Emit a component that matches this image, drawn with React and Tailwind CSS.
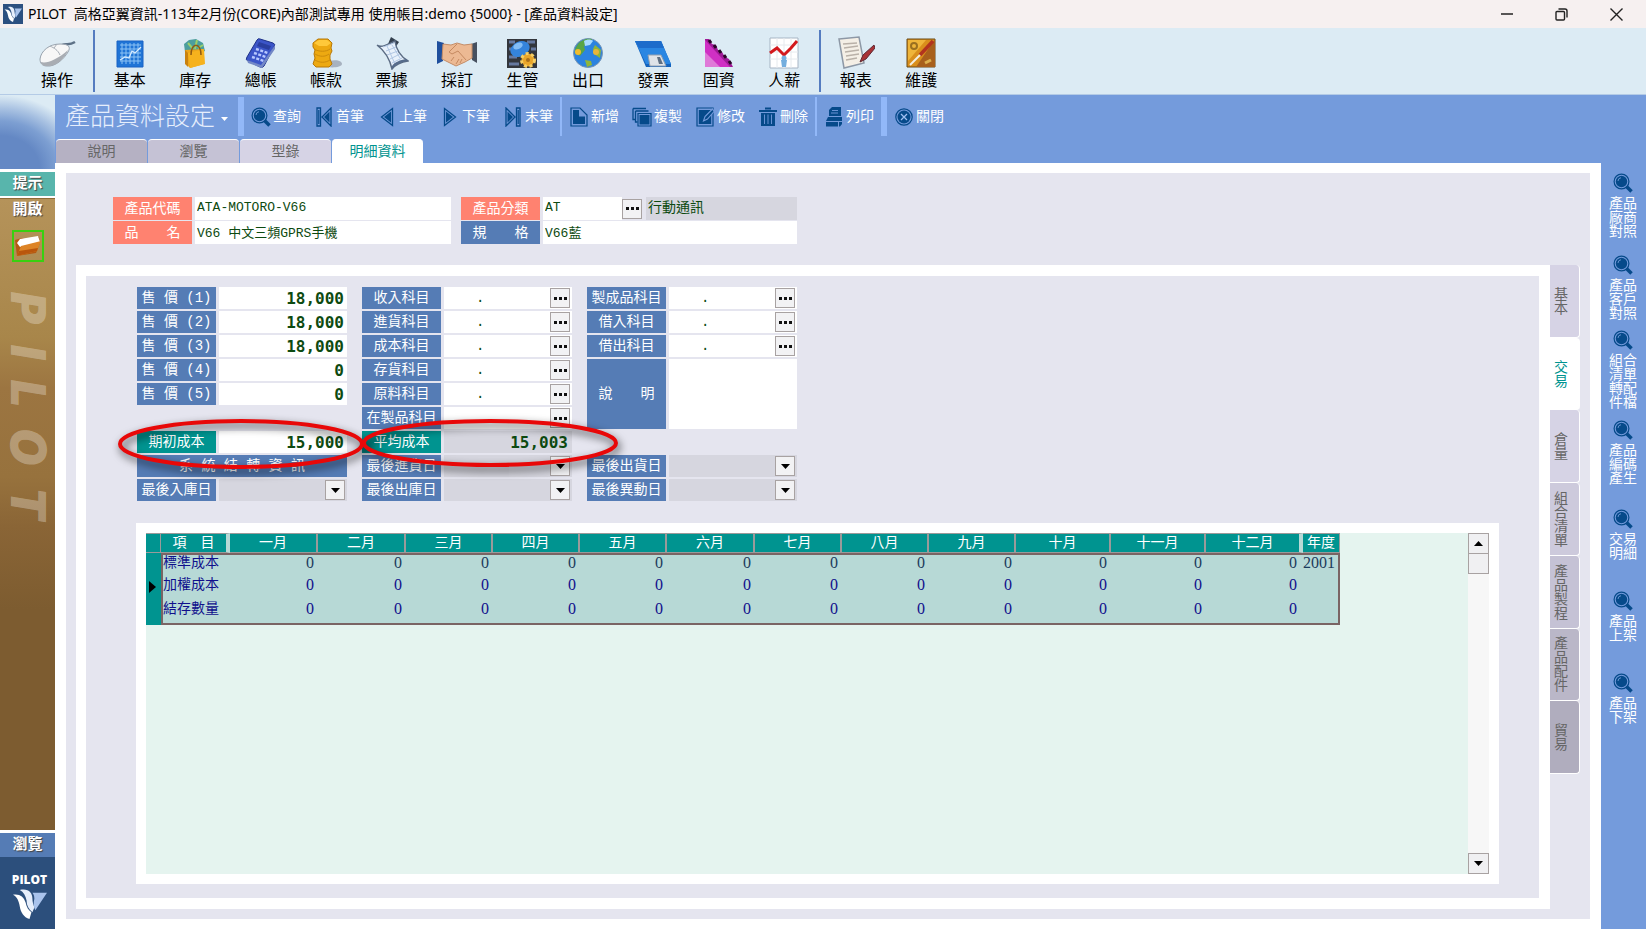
import React, { useState } from 'react';

const NAVY = '#064a8a';

/* ---------- Small action icons ---------- */

const SearchIcon = () => (
  <svg width="20" height="20" viewBox="0 0 20 20" fill="none">
    <circle cx="8.5" cy="8.5" r="7.4" stroke={NAVY} strokeWidth="1.2" />
    <circle cx="8.5" cy="8.5" r="5.7" fill={NAVY} />
    <path d="M5 8a3.500 3.500 0 0 1 3-3.300" stroke="#7ea6e0" strokeWidth="0.8" />
    <path d="M13.500 13.500l5 5" stroke={NAVY} strokeWidth="3.6" />
  </svg>
);

const FirstIcon = () => (
  <svg width="16" height="20" viewBox="0 0 16 20" fill="none">
    <path d="M1 1h3.500v18H1zM15 1v18L6 10z" stroke={NAVY} strokeWidth="1.3" />
    <path d="M2.200 3h1.200v14H2.200zM13.500 4.500v11L8 10z" fill={NAVY} />
  </svg>
);

const PrevIcon = () => (
  <svg width="14" height="20" viewBox="0 0 14 20" fill="none">
    <path d="M12.500 1.500v17L1.500 10z" stroke={NAVY} strokeWidth="1.3" />
    <path d="M11 4.500v11L4 10z" fill={NAVY} />
  </svg>
);

const NextIcon = () => (
  <svg width="14" height="20" viewBox="0 0 14 20" fill="none">
    <path d="M1.500 1.500v17L12.500 10z" stroke={NAVY} strokeWidth="1.3" />
    <path d="M3 4.500v11L10 10z" fill={NAVY} />
  </svg>
);

const LastIcon = () => (
  <svg width="16" height="20" viewBox="0 0 16 20" fill="none">
    <path d="M15 1h-3.500v18H15zM1 1v18L10 10z" stroke={NAVY} strokeWidth="1.3" />
    <path d="M13.800 3h-1.200v14h1.200zM2.500 4.500v11L8 10z" fill={NAVY} />
  </svg>
);

const NewIcon = () => (
  <svg width="18" height="20" viewBox="0 0 18 20" fill="none">
    <path d="M1 1h9l7 7v11H1z" stroke={NAVY} strokeWidth="1.2" />
    <path d="M3 3h6v6.500h6V17H3z" fill={NAVY} />
  </svg>
);

const CopyIcon = () => (
  <svg width="20" height="20" viewBox="0 0 20 20" fill="none">
    <path d="M1 1.500h13M1 1.500v11h2M3.500 4h13M3.500 4v11h2" stroke={NAVY} strokeWidth="1.3" />
    <path d="M6 6.500h13v12.500H6z" stroke={NAVY} strokeWidth="1.2" />
    <path d="M7.500 8h10v9.500h-10z" fill={NAVY} />
  </svg>
);

const EditIcon = () => (
  <svg width="18" height="20" viewBox="0 0 18 20" fill="none">
    <path d="M1 1h16v18H1z" stroke={NAVY} strokeWidth="1.2" />
    <path d="M2.800 3h12.400v14H2.800z" fill={NAVY} />
    <path d="M16.500 2L9 9.500l-1.500 4.500 4-2L18 4.500z" fill={NAVY} stroke="#749bdc" strokeWidth="1.1" />
  </svg>
);

const TrashIcon = () => (
  <svg width="18" height="20" viewBox="0 0 18 20" fill="none">
    <path d="M0 4h18M6 1.500h6" stroke={NAVY} strokeWidth="2.2" />
    <path d="M2 6h14v13H2z" fill={NAVY} />
    <path d="M5.500 7.500V17M9 7.500V17M12.500 7.500V17" stroke="#749bdc" strokeWidth="0.9" />
  </svg>
);

const PrintIcon = () => (
  <svg width="18" height="20" viewBox="0 0 18 20" fill="none">
    <path d="M7 0h9v9H4V3z" fill={NAVY} />
    <path d="M7 3.500h6M6 6h7" stroke="#749bdc" strokeWidth="0.9" />
    <path d="M3 10h14v4H1zM1 15h12v4.500H1zM14 15h3v2l-2 2.500h-1z" fill={NAVY} />
  </svg>
);

const CloseIcon = () => (
  <svg width="18" height="20" viewBox="0 0 18 20" fill="none">
    <circle cx="9" cy="10" r="8.2" stroke={NAVY} strokeWidth="1.2" />
    <circle cx="9" cy="10" r="6.5" fill={NAVY} />
    <path d="M6 7l6 6M12 7l-6 6" stroke="#9fc0f2" strokeWidth="1.3" />
  </svg>
);

/* ---------- Module icons of the main toolbar ---------- */

const MouseIcon = () => (
  <svg width="38" height="32" viewBox="0 0 38 32">
    <path d="M24 8c4-2 7 1 13-3" stroke="#5d7186" strokeWidth="2.400" fill="none" />
    <path d="M2 22C3 14 11 7 22 7c9 0 11 3 8 8-4 7-13 15-21 14-5 0-7-3-7-7z" fill="#f7f7f7" stroke="#98a2ad" />
    <path d="M3 25c5 2 16-2 27-12-3 9-13 17-21 16-4 0-6-2-6-4z" fill="#a9adb3" />
    <path d="M12 9c4 2 8 4 10 9M19 7l-3 4" stroke="#a6adb5" fill="none" />
  </svg>
);

const BasicIcon = () => (
  <svg width="32" height="32" viewBox="0 0 32 32">
    <path d="M3 4h26v26H3z" fill="#1f74d6" stroke="#1a63c4" />
    <path d="M6 8h21M6 12h21M6 16h21M6 20h21M6 24h21M8 6v21M12 6v21M16 6v21M20 6v21M24 6v21" stroke="#8cc2f4" strokeWidth="1" />
    <path d="M6 23l5-3 4 1 3-7 3 2 6-6" stroke="#d7ebff" strokeWidth="1.2" fill="none" />
  </svg>
);

const BagIcon = () => (
  <svg width="32" height="32" viewBox="0 0 32 32">
    <path d="M5 7l5-4 7-1 7 4 2 8-9 4-11-3z" fill="#4b9e9e" />
    <path d="M9 6l5 6M18 3l-2 9M24 8l-5 3" stroke="#9ad06b" strokeWidth="2" />
    <path d="M6 13l18-1 1 15-14 4-4-4z" fill="#eba51a" />
    <path d="M6 13l3 3v14l-3-3z" fill="#c9820f" />
    <path d="M9 16l16-4 1 15-15 4z" fill="#f6b21d" />
    <path d="M12 18c0-13 10-13 10 0" stroke="#8f5a12" strokeWidth="1.5" fill="none" />
  </svg>
);

const LedgerIcon = () => (
  <svg width="32" height="32" viewBox="0 0 32 32">
    <path d="M12 3q1-2 3-1l13 4q3 1 1 4L19 29q-1 2-4 1L3 24q-3-1-1-4z" fill="#3b55c8" stroke="#1e3188" />
    <path d="M14 5l12 4-2 4-12-4z" fill="#2a3f9f" />
    <path d="M11 12l12 4M9 16l12 4M7 20l12 4" stroke="#b8c9ff" strokeWidth="2.400" strokeDasharray="3 1.500" />
    <path d="M2 23l14 5 14-20v4L17 31 3 26z" fill="#7388c6" />
  </svg>
);

const CoinsIcon = () => (
  <svg width="34" height="32" viewBox="0 0 34 32">
    <path d="M20 24c8-2 13 0 13 3s-9 4-14 3z" fill="#a7b2c0" />
    <path d="M4 6l5-4h10l4 4-1 5 1 3-2 4v4l2 5-3 3H7l-3-3 2-6-1-4 1-4-2-3z" fill="#eda911" stroke="#b87806" />
    <path d="M5 6l5-3h8l4 3-4 3h-8z" fill="#ffc93a" />
    <path d="M5 12c5 3 12 3 16 0M6 17c5 3 10 3 14 0M6 23c5 3 10 3 15 0" stroke="#cc8b0b" strokeWidth="1" fill="none" />
  </svg>
);

const NoteIcon = () => (
  <svg width="34" height="34" viewBox="0 0 34 34">
    <path d="M16 1l8 5-4 6-7-4z" fill="#34404f" />
    <path d="M2 9c4 3 10 0 18-4 1 8 5 15 13 20-7 1-12 3-16 8C15 24 10 15 2 9z" fill="#e8f1fb" stroke="#5b6c84" strokeWidth="1.5" />
    <path d="M8 11l11-4M11 15l10-4M12 19l11-4M15 23l10-5M17 27l10-5M12 10l8 18M17 9l8 13" stroke="#b1c7e4" />
    <path d="M17 33c4-5 9-7 16-8l-2-2c-6 1-11 3-14 7z" fill="#566c8c" />
  </svg>
);

const HandshakeIcon = () => (
  <svg width="40" height="28" viewBox="0 0 40 28">
    <path d="M0 2l7 2-1 18-6 3z" fill="#1f4f9d" />
    <path d="M40 3l-6 2 1 16 5 3z" fill="#46505f" />
    <path d="M6 5l8 1 6-2 7 2 8-1v14l-7 4-9 4-8-4-6-3z" fill="#ecb993" stroke="#c48d68" />
    <path d="M20 5l-8 8 3 2 6-3 8 9M14 22l3-4M19 25l3-5M23 24l2-4" stroke="#c58960" strokeWidth="1" fill="none" />
  </svg>
);

const ProductionIcon = () => (
  <svg width="32" height="32" viewBox="0 0 32 32">
    <path d="M1 2h30v29H1z" fill="#33363c" />
    <path d="M3 5h6M21 5h8M3 12h4M25 12h5M3 20h8M3 27h10" stroke="#6679a0" strokeWidth="3" />
    <ellipse cx="14" cy="12" rx="10" ry="7.5" transform="rotate(-25 14 12)" fill="#3484dc" />
    <ellipse cx="12" cy="9" rx="5" ry="3" transform="rotate(-25 12 9)" fill="#83bdf5" />
    <circle cx="22" cy="23" r="6.5" fill="#e8a52a" stroke="#f7cf63" strokeWidth="3" strokeDasharray="3 2.500" />
    <circle cx="22" cy="23" r="2" fill="#a9701a" />
  </svg>
);

const GlobeIcon = () => (
  <svg width="32" height="32" viewBox="0 0 32 32">
    <circle cx="16" cy="16" r="14.5" fill="#2b83e0" stroke="#7a96b4" />
    <path d="M6 7c3-4 9-6 14-5l-3 5-5 2 1 4-5 6-5-3c-1-3 1-6 3-9z" fill="#58a545" />
    <path d="M23 8l6 5-1 8-6-4-1-5zM13 23l6 1 1 4-5 2z" fill="#8fb53a" />
    <circle cx="6" cy="15" r="3" fill="#f0bc2c" />
    <circle cx="24" cy="15" r="3" fill="#e9b53a" />
    <path d="M12 4c3-2 7-2 9 0l-3 4-5 1z" fill="#a7daff" />
  </svg>
);

const InvoiceIcon = () => (
  <svg width="38" height="30" viewBox="0 0 38 30">
    <path d="M1 3h26l10 23v3H12z" fill="#1463bd" />
    <path d="M1 3h26l10 23H12z" fill="#2a86e2" />
    <path d="M1 3h26l3 7H5z" fill="#1d6ccb" />
    <path d="M14 17h13l5 11H16z" fill="#dfe3e8" stroke="#93a0b0" />
    <path d="M23 19h3l3 7h-4z" fill="#5f6f82" />
  </svg>
);

const AssetIcon = () => (
  <svg width="30" height="32" viewBox="0 0 30 32">
    <path d="M1 2h4l3 5 4 1 2 5 4 2 3 5 4 2 4 8H1z" fill="#a01a98" />
    <path d="M1 3l25 27H1z" fill="#cf30c4" />
    <path d="M1 15l15 15H1z" fill="#df79d8" />
    <path d="M5 3l2 3M10 8l2 3M15 13l2 3M20 18l2 3M25 24l2 3" stroke="#2c0629" strokeWidth="3" />
  </svg>
);

const PayrollIcon = () => (
  <svg width="32" height="32" viewBox="0 0 32 32">
    <path d="M2 1h28v30H2z" fill="#fff" stroke="#a7b5c4" />
    <path d="M2 8h28M2 15h28M2 22h28M9 1v30M16 1v30M23 1v30" stroke="#e6eaee" />
    <path d="M2 16l7-5 7 7 7-7 6-7" stroke="#d3181c" strokeWidth="3" fill="none" />
    <circle cx="16" cy="21" r="2.5" fill="#74aede" />
    <path d="M13 23h6l-1 7h-4z" fill="#74aede" />
  </svg>
);

const ReportIcon = () => (
  <svg width="38" height="34" viewBox="0 0 38 34">
    <path d="M2 3l20-2 5 26-20 5z" fill="#f4efe6" stroke="#8d98a6" strokeWidth="1.5" />
    <path d="M6 8l14-1M7 12l14-2M8 16l14-2M9 20l13-2M9 24l11-2" stroke="#b9b1a8" strokeWidth="1.5" />
    <path d="M37 9L26 19l-3 7 6-3 9-11z" fill="#a93236" stroke="#5e2a33" />
  </svg>
);

const MaintainIcon = () => (
  <svg width="30" height="32" viewBox="0 0 30 32">
    <path d="M1 2h28v28H1z" fill="#d98f1c" stroke="#6b4a16" />
    <path d="M29 2v28H10z" fill="#a8601c" />
    <path d="M2 3h18L2 24z" fill="#efb53a" />
    <circle cx="8" cy="9" r="3" fill="none" stroke="#9a6f1f" strokeWidth="2" />
    <path d="M4 28L17 15" stroke="#f4eee0" strokeWidth="2" />
    <path d="M14 18L27 4" stroke="#b2341e" strokeWidth="3.500" />
    <path d="M19 26l6-3" stroke="#ddb04e" strokeWidth="3" />
  </svg>
);

const PilotMark = ({ size }) => (
  <svg width={size} height={size} viewBox="0 0 36 32">
    <path d="M1 7c7-1 11 2 13 8 1 5 3 8 6 10l-2 7c-6-2-9-7-10-13C7 13 5 9 1 7z" fill="#fff" />
    <path d="M8 2c9-2 13 3 13 9 0 3 1 6 2 9l-2 5c-4-3-6-7-6-12C14 8 12 4 8 2z" fill="#e6eefb" />
    <path d="M21 5h15L24 23c-2-4-2-8-1-12 0-3-1-5-2-6z" fill="#a9c3ec" />
  </svg>
);

/* ---------- Data ---------- */

const modules = [
  { label: '基本', Icon: BasicIcon },
  { label: '庫存', Icon: BagIcon },
  { label: '總帳', Icon: LedgerIcon },
  { label: '帳款', Icon: CoinsIcon },
  { label: '票據', Icon: NoteIcon },
  { label: '採訂', Icon: HandshakeIcon },
  { label: '生管', Icon: ProductionIcon },
  { label: '出口', Icon: GlobeIcon },
  { label: '發票', Icon: InvoiceIcon },
  { label: '固資', Icon: AssetIcon },
  { label: '人薪', Icon: PayrollIcon },
];

const navActions = [
  { label: '查詢', Icon: SearchIcon },
  { label: '首筆', Icon: FirstIcon },
  { label: '上筆', Icon: PrevIcon },
  { label: '下筆', Icon: NextIcon },
  { label: '末筆', Icon: LastIcon },
];

const editActions = [
  { label: '新增', Icon: NewIcon },
  { label: '複製', Icon: CopyIcon },
  { label: '修改', Icon: EditIcon },
  { label: '刪除', Icon: TrashIcon },
];

const pageTabs = [
  { label: '說明', color: 'bg-[#b5b1c3]' },
  { label: '瀏覽', color: 'bg-[#c5c2d5]' },
  { label: '型錄', color: 'bg-[#d6d3e5]' },
  { label: '明細資料', color: 'bg-[#d6d3e5]' },
];

const sideTabs = [
  { label: '基本', color: 'bg-[#d6d3e5]' },
  { label: '交易', color: 'bg-[#d6d3e5]' },
  { label: '倉量', color: 'bg-[#d6d3e5]' },
  { label: '組合清單', color: 'bg-[#cdcadc]' },
  { label: '產品製程', color: 'bg-[#c5c2d5]' },
  { label: '產品配件', color: 'bg-[#bab7c8]' },
  { label: '貿易', color: 'bg-[#b0adbe]' },
];

const quickLinks = [
  { label: '產品廠商對照', height: 'h-[82px]' },
  { label: '產品客戶對照', height: 'h-[75px]' },
  { label: '組合清單轉配件檔', height: 'h-[90px]' },
  { label: '產品編碼產生', height: 'h-[89px]' },
  { label: '交易明細', height: 'h-[82px]' },
  { label: '產品上架', height: 'h-[82px]' },
  { label: '產品下架', height: 'h-[82px]' },
];

const months = [
  { label: '一月', width: 'w-[88px]' },
  { label: '二月', width: 'w-[88px]' },
  { label: '三月', width: 'w-[87px]' },
  { label: '四月', width: 'w-[87px]' },
  { label: '五月', width: 'w-[87px]' },
  { label: '六月', width: 'w-[88px]' },
  { label: '七月', width: 'w-[87px]' },
  { label: '八月', width: 'w-[87px]' },
  { label: '九月', width: 'w-[87px]' },
  { label: '十月', width: 'w-[95px]' },
  { label: '十一月', width: 'w-[95px]' },
  { label: '十二月', width: 'w-[97px]' },
];

const costRows = [
  { label: '標準成本', year: '2001', color: 'text-[#1c3c5c]' },
  { label: '加權成本', year: '', color: 'text-[#10108c]' },
  { label: '結存數量', year: '', color: 'text-[#10108c]' },
];

/* ---------- Form pieces ---------- */

const labelColors = {
  blue: 'bg-[#557cb5]',
  red: 'bg-[#ff8270]',
  teal: 'bg-[#009490]',
};

const FieldLabel = ({ id, color = 'blue', className = '', children }) => (
  <label
    htmlFor={id}
    className={`flex items-center justify-center whitespace-pre text-sm leading-none text-white ${labelColors[color]} ${className}`}
  >
    {children}
  </label>
);

const TextField = ({ id, value, className = '' }) => (
  <input id={id} defaultValue={value} className={`min-w-0 bg-white px-0.5 pb-0.5 text-[13px] leading-none text-[#0d4a10] outline-none ${className}`} />
);

const AmountRow = ({ id, label, value, color, readOnly }) => (
  <>
    <FieldLabel id={id} color={color}>{label}</FieldLabel>
    <input
      id={id}
      defaultValue={value}
      readOnly={readOnly}
      className={`min-w-0 text-right font-['DejaVu_Sans_Mono',monospace] text-base leading-none font-bold text-[#0d4a10] outline-none ${readOnly ? 'bg-[#d6d6df] pr-1' : 'bg-white pr-[3px]'}`}
    />
  </>
);

const LookupButton = ({ label }) => (
  <button aria-label={label} className="flex size-5 shrink-0 items-center justify-center border border-[#a8a2a2] bg-[#f2f2f4]">
    <svg width="13" height="3" viewBox="0 0 13 3"><path d="M0 0h3v3H0zM5 0h3v3H5zM10 0h3v3h-3z" fill="#111" /></svg>
  </button>
);

const LookupRow = ({ id, label, value = '.' }) => (
  <>
    <FieldLabel id={id}>{label}</FieldLabel>
    <div className="flex items-center bg-white pr-0.5">
      <input id={id} defaultValue={value} className="w-0 flex-1 pl-8 text-sm leading-none text-[#0d4a10] outline-none" />
      <LookupButton label={`${label} 選擇`} />
    </div>
  </>
);

const DateRow = ({ id, label }) => (
  <>
    <FieldLabel id={id}>{label}</FieldLabel>
    <div className="relative flex items-center justify-end bg-[#d6d6df] pr-0.5">
      <select id={id} className="absolute inset-0 w-full appearance-none bg-transparent outline-none">
        <option value=""></option>
      </select>
      <span className="pointer-events-none flex size-5 items-center justify-center border border-[#a8a2a2] bg-[#f2f2f4]">
        <svg width="9" height="5" viewBox="0 0 9 5"><path d="M0 0h9L4.500 5z" fill="#000" /></svg>
      </span>
    </div>
  </>
);

const formGrid = 'grid auto-rows-[22px] grid-cols-[79px_128px] content-start gap-x-[3px] gap-y-0.5';

const PriceForm = () => (
  <div className="relative flex w-fit gap-[15px]">
    <div className={formGrid}>
      <AmountRow id="price1" label="售 價 (1)" value="18,000" />
      <AmountRow id="price2" label="售 價 (2)" value="18,000" />
      <AmountRow id="price3" label="售 價 (3)" value="18,000" />
      <AmountRow id="price4" label="售 價 (4)" value="0" />
      <AmountRow id="price5" label="售 價 (5)" value="0" />
      <div className="col-span-2"></div>
      <AmountRow id="openCost" label="期初成本" value="15,000" color="teal" />
      <div className="col-span-2 flex items-center justify-center bg-[#557cb5] text-sm leading-none text-white">系 統 結 轉 資 訊</div>
      <DateRow id="lastIn" label="最後入庫日" />
    </div>

    <div className={formGrid}>
      <LookupRow id="incomeAcc" label="收入科目" />
      <LookupRow id="purchaseAcc" label="進貨科目" />
      <LookupRow id="costAcc" label="成本科目" />
      <LookupRow id="stockAcc" label="存貨科目" />
      <LookupRow id="materialAcc" label="原料科目" />
      <LookupRow id="wipAcc" label="在製品科目" value="" />
      <AmountRow id="avgCost" label="平均成本" value="15,003" color="teal" readOnly />
      <DateRow id="lastPurchase" label="最後進貨日" />
      <DateRow id="lastOut" label="最後出庫日" />
    </div>

    <div className={formGrid}>
      <LookupRow id="finishedAcc" label="製成品科目" />
      <LookupRow id="borrowAcc" label="借入科目" />
      <LookupRow id="lendAcc" label="借出科目" />
      <FieldLabel id="remark" className="row-span-3">{'說　　明'}</FieldLabel>
      <textarea id="remark" className="row-span-3 resize-none bg-white text-sm text-[#0d4a10] outline-none"></textarea>
      <div className="col-span-2"></div>
      <DateRow id="lastShip" label="最後出貨日" />
      <DateRow id="lastChange" label="最後異動日" />
    </div>

    {/* Red marks around the two cost fields */}
    <svg className="pointer-events-none absolute inset-0 overflow-visible" width="660" height="216" viewBox="0 0 660 216" fill="none">
      <g stroke="#e80808" strokeWidth="4" className="drop-shadow-[2px_4px_4px_rgba(0,0,0,0.7)]">
        <ellipse cx="104" cy="157" rx="121" ry="23" />
        <ellipse cx="353" cy="156" rx="126" ry="22" />
      </g>
    </svg>
  </div>
);

const CostTable = () => (
  <div className="flex flex-1 bg-white p-2.5">
    <div className="min-w-0 flex-1 overflow-hidden bg-[#e5f4ef]">
      <table className="w-[1194px] table-fixed border-separate border-spacing-0 text-sm leading-none">
        <thead>
          <tr className="h-5 bg-[#009490] text-white">
            <th className="w-[15px] border border-l-0 border-[#9a9a9a] p-0"></th>
            <th className="w-[69px] border-y border-r-4 border-y-[#9a9a9a] border-r-[#b7d9d6] p-0 font-normal">{'項　目'}</th>
            {months.map((m) => (
              <th
                key={m.label}
                className={`p-0 font-normal ${m.width} ${m.label === '十二月' ? 'border-y border-r-4 border-y-[#9a9a9a] border-r-[#b7d9d6]' : 'border-y border-r-2 border-[#9a9a9a]'}`}
              >
                {m.label}
              </th>
            ))}
            <th className="w-[37px] border-y border-r border-[#9a9a9a] p-0 font-normal">年度</th>
          </tr>
        </thead>
        <tbody className="bg-[#b7d9d6]">
          {costRows.map((row, i) => {
            const edge = i === 0 ? 'border-t-2 border-[#7a6464]' : i === 2 ? 'border-b-2 border-[#7a6464]' : 'border-[#7a6464]';
            return (
              <tr key={row.label} className={`h-6 align-top ${row.color}`}>
                <td className="bg-[#009490] p-0">
                  {i === 1 && (
                    <svg className="ml-[3px] mt-1" width="7" height="12" viewBox="0 0 7 12"><path d="M0 0l7 6-7 6z" fill="#000" /></svg>
                  )}
                </td>
                <th className={`border-l-2 p-0 text-left font-normal leading-4 text-[#10108c] ${edge}`}>{row.label}</th>
                {months.map((m) => (
                  <td
                    key={m.label}
                    className={`p-0 text-right font-['Liberation_Serif',serif] text-base leading-4 ${m.label === '十二月' ? 'pr-1.5' : 'pr-1'} ${edge}`}
                  >
                    0
                  </td>
                ))}
                <td className={`border-r-2 p-0 font-['Liberation_Serif',serif] text-base leading-4 ${edge}`}>{row.year}</td>
              </tr>
            );
          })}
        </tbody>
      </table>
    </div>
    <div className="flex w-[21px] flex-col bg-[#f7f7f7]">
      <button aria-label="向上捲動" className="flex h-[21px] items-center justify-center border border-[#a8a2a2] bg-[#f0f0f2]">
        <svg width="9" height="5" viewBox="0 0 9 5"><path d="M0 5h9L4.500 0z" fill="#000" /></svg>
      </button>
      <div className="h-5 border border-t-0 border-[#a8a2a2] bg-[#f0f0f2]"></div>
      <button aria-label="向下捲動" className="mt-auto flex h-[21px] items-center justify-center border border-[#a8a2a2] bg-[#f0f0f2]">
        <svg width="9" height="5" viewBox="0 0 9 5"><path d="M0 0h9L4.500 5z" fill="#000" /></svg>
      </button>
    </div>
  </div>
);

/* ---------- Frame pieces ---------- */

const TitleBar = () => (
  <header className="flex h-7 items-center bg-[#f6f0f0] pl-[3px] text-black">
    <span className="flex size-5 items-center justify-center bg-[#2c5080]"><PilotMark size={18} /></span>
    <h1 className="ml-[5px] whitespace-pre font-['Noto_Sans','Noto_Sans_CJK_TC',sans-serif] text-sm leading-none">
      {'PILOT  高格亞翼資訊-113年2月份(CORE)內部測試專用 使用帳目:demo {5000} - [產品資料設定]'}
    </h1>
    <div className="ml-auto flex h-full pr-0.5">
      <button aria-label="最小化" className="flex w-[55px] items-center justify-center">
        <svg width="12" height="12" viewBox="0 0 12 12"><path d="M0 6h12" stroke="#222" strokeWidth="1.5" /></svg>
      </button>
      <button aria-label="還原" className="flex w-[55px] items-center justify-center">
        <svg width="13" height="13" viewBox="0 0 13 13" fill="none" stroke="#222" strokeWidth="1.4">
          <rect x="1" y="3.5" width="8.5" height="8.5" rx="1" />
          <path d="M3.500 1H10a2 2 0 0 1 2 2v6.500" />
        </svg>
      </button>
      <button aria-label="關閉視窗" className="flex w-[55px] items-center justify-center">
        <svg width="13" height="13" viewBox="0 0 13 13"><path d="M.5.5l12 12M12.500.5l-12 12" stroke="#222" strokeWidth="1.4" /></svg>
      </button>
    </div>
  </header>
);

const ModuleButton = ({ label, Icon }) => (
  <button className="flex w-[65px] flex-auto flex-col items-center pt-2 text-base leading-none text-black">
    <span className="flex h-[34px] items-center justify-center"><Icon /></span>
    <span className="mt-1">{label}</span>
  </button>
);

const ModuleBar = () => (
  <nav className="flex h-[67px] items-stretch border-b border-[#b4cbe6] bg-[#dcebf4]">
    <div className="ml-6 flex w-[66px]">
      <ModuleButton label="操作" Icon={MouseIcon} />
    </div>
    <div className="my-0.5 ml-[3px] mr-0.5 w-0.5 bg-[#557cc0]"></div>
    <div className="flex w-[720px]">
      {modules.map((m) => <ModuleButton key={m.label} label={m.label} Icon={m.Icon} />)}
    </div>
    <div className="my-0.5 ml-0.5 mr-0.5 w-0.5 bg-[#557cc0]"></div>
    <div className="flex w-[131px]">
      <ModuleButton label="報表" Icon={ReportIcon} />
      <ModuleButton label="維護" Icon={MaintainIcon} />
    </div>
  </nav>
);

const ActionButton = ({ label, Icon }) => (
  <button className="flex items-center text-sm leading-none text-white">
    <span className="flex w-6 justify-center"><Icon /></span>
    {label}
  </button>
);

const ActionBar = () => (
  <div className="flex h-11 items-stretch pb-[3px] pt-0.5">
    <button className="flex items-center gap-1.5 pl-2.5 pt-1 text-[25px] font-light leading-none text-[#e6eefc]">
      產品資料設定
      <svg width="7" height="4" viewBox="0 0 7 4"><path d="M0 0h7L3.500 4z" fill="#fff" /></svg>
    </button>
    <div className="ml-2.5 mr-[5px] w-1.5 bg-[#92b8f8]"></div>
    <div className="flex gap-[11px]">
      {navActions.map((a) => <ActionButton key={a.label} label={a.label} Icon={a.Icon} />)}
    </div>
    <div className="ml-[7px] mr-[5px] w-0.5 bg-[#92b8f8]"></div>
    <div className="flex gap-[11px]">
      {editActions.map((a) => <ActionButton key={a.label} label={a.label} Icon={a.Icon} />)}
    </div>
    <div className="ml-[7px] mr-[5px] w-0.5 bg-[#92b8f8]"></div>
    <ActionButton label="列印" Icon={PrintIcon} />
    <div className="ml-[7px] mr-[5px] w-1.5 bg-[#92b8f8]"></div>
    <ActionButton label="關閉" Icon={CloseIcon} />
  </div>
);

const LeftRail = () => (
  <aside className="flex w-[55px] shrink-0 flex-col bg-white">
    <div className="h-[74px] bg-[radial-gradient(ellipse_88px_74px_at_0%_100%,#6488c4_45%,#7d9fd2_65%,#a9c2e2_82%,#dcebf4_100%)]"></div>
    <button className="mt-[3px] flex h-6 items-center justify-center bg-[#58b5ac] text-[15px] font-bold leading-none text-white text-shadow-[1px_1px_1px_#444]">提示</button>
    <div className="mt-0.5 flex flex-1 flex-col items-center border-t border-[#8f6a36] bg-[linear-gradient(#b5935a,#a8864a_22%,#9c7541_30%,#97723d_44%,#8a6536_52%,#7d5c30_65%)]">
      <button className="mt-1 text-[15px] font-bold leading-none text-white text-shadow-[1px_1px_1px_#444]">開啟</button>
      <button aria-label="開啟檔案" className="mt-3 flex size-8 items-center justify-center border-2 border-[#38d010]">
        <svg width="28" height="24" viewBox="0 0 28 24">
          <path d="M1 6l7-2 3 1 14-2 1 6-4 10-19 3z" fill="#b55a12" />
          <path d="M3 9l3-4 18-3 2 6-20 5z" fill="#fff" />
          <path d="M3 22l4-10 20-5-4 10z" fill="#dd8426" />
          <path d="M3 22l2-5 19-3-1 3z" fill="#b9560c" />
        </svg>
      </button>
      <div className="mt-[30px] flex h-[228px] flex-col justify-between font-['Inter',sans-serif] text-5xl font-black italic leading-none text-white/30">
        <span className="[writing-mode:vertical-rl]">P</span>
        <span className="[writing-mode:vertical-rl]">I</span>
        <span className="[writing-mode:vertical-rl]">L</span>
        <span className="[writing-mode:vertical-rl]">O</span>
        <span className="[writing-mode:vertical-rl]">T</span>
      </div>
    </div>
    <button className="mt-[3px] flex h-6 items-center justify-center bg-[#557cb5] text-[15px] font-bold leading-none text-white text-shadow-[1px_1px_1px_#444]">瀏覽</button>
    <div className="flex h-[72px] flex-col items-center bg-[#2c4f7c] pt-[17px] text-white">
      <span className="pl-1 font-['Open_Sans',sans-serif] text-xs font-extrabold leading-none">PILOT</span>
      <span className="pl-1"><PilotMark size={35} /></span>
    </div>
  </aside>
);

const QuickRail = () => (
  <aside className="flex w-[45px] shrink-0 flex-col items-center pr-px pt-2.5">
    {quickLinks.map((link) => (
      <button key={link.label} className={`flex w-7 flex-col items-center gap-1 text-sm leading-[14px] text-white ${link.height}`}>
        <SearchIcon />
        <span className="break-all">{link.label}</span>
      </button>
    ))}
  </aside>
);

const ProductHeader = () => (
  <div className="flex h-[92px] items-start gap-2.5 pl-[37px] pt-6">
    <div className="grid auto-rows-[23px] grid-cols-[79px_256px] gap-x-[3px] gap-y-px">
      <FieldLabel id="code" color="red">產品代碼</FieldLabel>
      <TextField id="code" value="ATA-MOTORO-V66" />
      <FieldLabel id="name" color="red">{'品　　名'}</FieldLabel>
      <TextField id="name" value="V66 中文三頻GPRS手機" />
    </div>
    <div className="grid auto-rows-[23px] grid-cols-[79px_254px] gap-x-[3px] gap-y-px">
      <FieldLabel id="category" color="red">產品分類</FieldLabel>
      <div className="flex items-center">
        <TextField id="category" value="AT" className="h-full w-[79px]" />
        <LookupButton label="產品分類 選擇" />
        <output htmlFor="category" className="ml-1 flex h-full flex-1 items-center bg-[#d6d6df] pb-0.5 pl-0.5 text-sm leading-none text-[#0d4a10]">行動通訊</output>
      </div>
      <FieldLabel id="spec">{'規　　格'}</FieldLabel>
      <TextField id="spec" value="V66藍" />
    </div>
  </div>
);

const App = () => {
  const [page, setPage] = useState('明細資料');
  const [section, setSection] = useState('交易');

  return (
    <div className="flex min-h-screen flex-col bg-[#749bdc] font-['Liberation_Mono','Noto_Sans_CJK_TC',monospace]">
      <TitleBar />
      <ModuleBar />

      <div className="flex flex-1">
        <LeftRail />

        <div className="flex min-w-0 flex-1 flex-col">
          <ActionBar />

          {/* Page tabs */}
          <div className="flex h-6 items-stretch gap-px pl-px">
            {pageTabs.map((tab) => (
              <button
                key={tab.label}
                onClick={() => setPage(tab.label)}
                className={`w-[91px] rounded-t border-t border-white text-sm leading-none ${page === tab.label ? 'bg-white text-[#009490]' : `${tab.color} text-[#666]`}`}
              >
                {tab.label}
              </button>
            ))}
          </div>

          <div className="flex flex-1">
            <main className="flex min-w-0 flex-1 flex-col bg-white px-[11px] py-2.5">
              <div className="flex flex-1 flex-col bg-[#e5e5ef] px-2.5 pb-2.5">
                <ProductHeader />

                <div className="flex flex-1">
                  <section className="flex min-w-0 flex-1 flex-col bg-white p-[11px] pl-2.5">
                    <div className="flex flex-1 flex-col bg-[#e5e5ef] pb-3.5 pl-[50px] pr-10 pt-[11px]">
                      <div className="mb-[22px] pl-px">
                        <PriceForm />
                      </div>
                      <CostTable />
                    </div>
                  </section>

                  {/* Section tabs down the right edge */}
                  <div className="flex h-[509px] w-[30px] flex-col">
                    {sideTabs.map((tab) => (
                      <button
                        key={tab.label}
                        onClick={() => setSection(tab.label)}
                        className={`flex flex-1 items-center rounded-r border-b border-white pl-0.5 text-sm leading-none ${section === tab.label ? 'bg-white text-[#009490]' : `${tab.color} border-r text-[#666]`}`}
                      >
                        <span className="[writing-mode:vertical-rl]">{tab.label}</span>
                      </button>
                    ))}
                  </div>
                </div>
              </div>
            </main>
            <QuickRail />
          </div>
        </div>
      </div>
    </div>
  );
};

export default App;
